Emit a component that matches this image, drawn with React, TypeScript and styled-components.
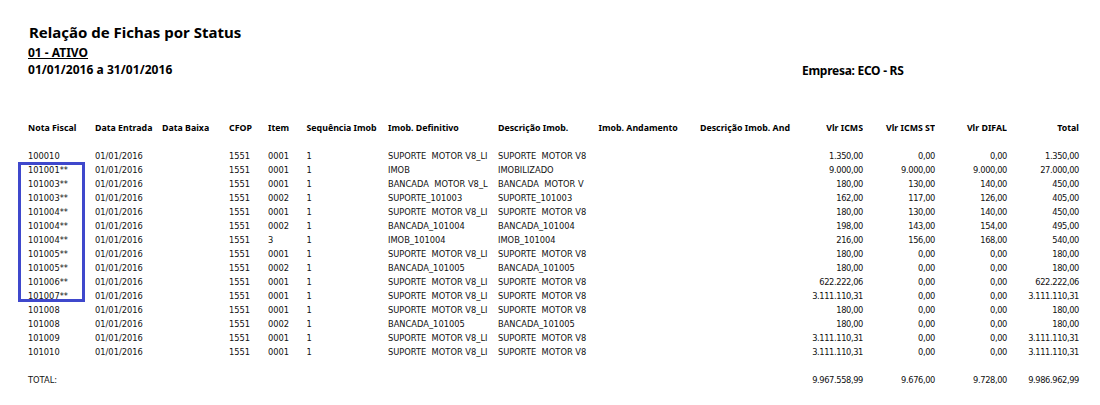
import styled, { createGlobalStyle } from "styled-components";

/* ── Report data ───────────────────────────────────────────────────── */

const MOTOR = "SUPORTE  MOTOR V8_LI";
const MOTOR_DESC = "SUPORTE  MOTOR V8";

const rows = [
  ["100010", "0001", MOTOR, MOTOR_DESC, "1.350,00", "0,00", "0,00", "1.350,00"],
  ["101001**", "0001", "IMOB", "IMOBILIZADO", "9.000,00", "9.000,00", "9.000,00", "27.000,00"],
  ["101003**", "0001", "BANCADA  MOTOR V8_L", "BANCADA  MOTOR V", "180,00", "130,00", "140,00", "450,00"],
  ["101003**", "0002", "SUPORTE_101003", "SUPORTE_101003", "162,00", "117,00", "126,00", "405,00"],
  ["101004**", "0001", MOTOR, MOTOR_DESC, "180,00", "130,00", "140,00", "450,00"],
  ["101004**", "0002", "BANCADA_101004", "BANCADA_101004", "198,00", "143,00", "154,00", "495,00"],
  ["101004**", "3", "IMOB_101004", "IMOB_101004", "216,00", "156,00", "168,00", "540,00"],
  ["101005**", "0001", MOTOR, MOTOR_DESC, "180,00", "0,00", "0,00", "180,00"],
  ["101005**", "0002", "BANCADA_101005", "BANCADA_101005", "180,00", "0,00", "0,00", "180,00"],
  ["101006**", "0001", MOTOR, MOTOR_DESC, "622.222,06", "0,00", "0,00", "622.222,06"],
  ["101007**", "0001", MOTOR, MOTOR_DESC, "3.111.110,31", "0,00", "0,00", "3.111.110,31"],
  ["101008", "0001", MOTOR, MOTOR_DESC, "180,00", "0,00", "0,00", "180,00"],
  ["101008", "0002", "BANCADA_101005", "BANCADA_101005", "180,00", "0,00", "0,00", "180,00"],
  ["101009", "0001", MOTOR, MOTOR_DESC, "3.111.110,31", "0,00", "0,00", "3.111.110,31"],
  ["101010", "0001", MOTOR, MOTOR_DESC, "3.111.110,31", "0,00", "0,00", "3.111.110,31"],
];

const headers = [
  "Nota Fiscal",
  "Data Entrada",
  "Data Baixa",
  "CFOP",
  "Item",
  "Sequência Imob",
  "Imob. Definitivo",
  "Descrição Imob.",
  "Imob. Andamento",
  "Descrição Imob. And",
];

/* ── Styled ────────────────────────────────────────────────────────── */

const GlobalStyle = createGlobalStyle`
  html, body {
    margin: 0;
    background: #fff;
  }
  body {
    font-family: "DejaVu Sans", Tahoma, sans-serif;
    color: #111;
  }
`;

const Page = styled.main`
  position: relative;
  width: 1100px;
  height: 405px;
  padding: 22px 0 0 28px;
  box-sizing: border-box;
  overflow: hidden;
`;

const Title = styled.h1`
  margin: 0 0 0 1px;
  height: 20px;
  font-family: "Noto Sans", Tahoma, sans-serif;
  font-size: 15px;
  line-height: 20px;
  font-weight: 700;
  color: #000;
`;

const Status = styled.div`
  margin-top: 2px;
  height: 17px;
  font-family: "Noto Sans", Tahoma, sans-serif;
  font-size: 12px;
  line-height: 17px;
  font-weight: 700;
  text-decoration: underline;
  color: #000;
`;

const PeriodRow = styled.div`
  display: grid;
  grid-template-columns: 774px auto;
  height: 17px;
  font-family: "Noto Sans", Tahoma, sans-serif;
  font-size: 12px;
  line-height: 17px;
  font-weight: 700;
  letter-spacing: 0.05px;
  color: #000;
`;

const Company = styled.div`
  margin-top: 1px;
  letter-spacing: -0.28px;
`;

const TableRow = styled.div<{ $gap?: number }>`
  display: grid;
  grid-template-columns: 67px 67px 67px 39px 38.5px 81.5px 110px 100.5px 101.5px 90px 73px 72px 72px 72px;
  height: 14px;
  margin-top: ${(p) => p.$gap ?? 0}px;
  font-size: 8.3px;
  line-height: 14px;
`;

const Head = styled(TableRow)`
  font-family: "Noto Sans", Tahoma, sans-serif;
  font-size: 8.8px;
  font-weight: 700;
  color: #000;
`;

const Cell = styled.div<{ $num?: boolean; $wide?: boolean }>`
  white-space: pre;
  overflow: ${(p) => (p.$wide ? "visible" : "hidden")};
  text-align: ${(p) => (p.$num ? "right" : "left")};
`;

const Amount = styled.div`
  white-space: pre;
  text-align: right;
  letter-spacing: -0.38px;
`;

const Highlight = styled.div`
  position: absolute;
  left: 18px;
  top: 162px;
  width: 67px;
  height: 140px;
  box-sizing: border-box;
  border: 3px solid #3f48cc;
`;

/* ── Page ──────────────────────────────────────────────────────────── */

export default function App() {
  return (
    <>
      <GlobalStyle />
      <Page>
        <Title>Relação de Fichas por Status</Title>
        <Status>01 - ATIVO</Status>
        <PeriodRow>
          <div>01/01/2016 a 31/01/2016</div>
          <Company>Empresa: ECO - RS</Company>
        </PeriodRow>

        <Head $gap={43}>
          {headers.map((h) => (
            <Cell key={h} $wide>{h}</Cell>
          ))}
          <Cell $num>Vlr ICMS</Cell>
          <Cell $num>Vlr ICMS ST</Cell>
          <Cell $num>Vlr DIFAL</Cell>
          <Cell $num>Total</Cell>
        </Head>

        {rows.map((r, i) => (
          <TableRow key={i} $gap={i === 0 ? 14 : 0}>
            <Cell>{r[0]}</Cell>
            <Cell>01/01/2016</Cell>
            <div />
            <Cell>1551</Cell>
            <Cell>{r[1]}</Cell>
            <Cell>1</Cell>
            <Cell>{r[2]}</Cell>
            <Cell>{r[3]}</Cell>
            <div />
            <div />
            <Amount>{r[4]}</Amount>
            <Amount>{r[5]}</Amount>
            <Amount>{r[6]}</Amount>
            <Amount>{r[7]}</Amount>
          </TableRow>
        ))}

        <TableRow $gap={14}>
          <Cell $wide>TOTAL:</Cell>
          <div /><div /><div /><div /><div /><div /><div /><div /><div />
          <Amount>9.967.558,99</Amount>
          <Amount>9.676,00</Amount>
          <Amount>9.728,00</Amount>
          <Amount>9.986.962,99</Amount>
        </TableRow>

        <Highlight />
      </Page>
    </>
  );
}
